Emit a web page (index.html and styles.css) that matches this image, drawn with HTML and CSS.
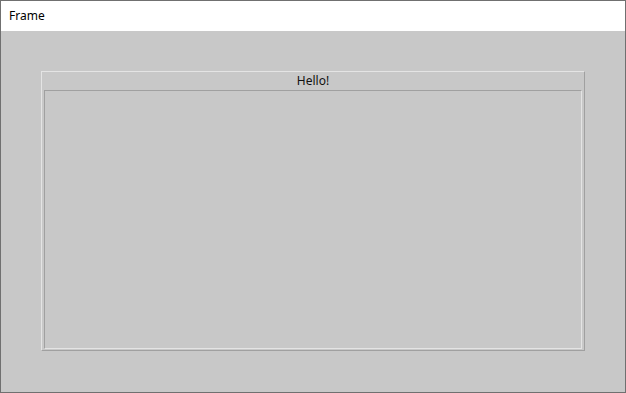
FILE: index.html
```html
<!DOCTYPE html>
<html lang="en">
    <head>
        <meta charset="UTF-8">
        <title>Frame</title>
        <link rel="stylesheet" href="styles.css">
    </head>
    <body>
        <div class="window">
            <div class="title-bar">Frame</div>
            <div class="content">
                <div class="panel">
                    <div class="panel-title">Hello!</div>
                    <div class="panel-body"></div>
                </div>
            </div>
        </div>
    </body>
</html>
```

FILE: styles.css
```css
* {
    margin: 0;
    padding: 0;
    box-sizing: border-box;
}

body {
    font-family: 'Noto Sans', 'DejaVu Sans', sans-serif;
    font-size: 12px;
    color: #000;
}

.window {
    width: 626px;
    height: 393px;
    border: 1px solid #707070;
    display: flex;
    flex-direction: column;
}

.title-bar {
    height: 30px;
    background: #fff;
    padding-left: 8px;
    line-height: 30px;
}

.content {
    flex: 1;
    background: #c8c8c8;
    padding: 40px 40px 41px 40px;
    display: flex;
}

.panel {
    flex: 1;
    display: flex;
    flex-direction: column;
    border: 1px solid;
    border-color: #e4e4e4 #a0a0a0 #a0a0a0 #e4e4e4;
    padding: 0 2px 1px 2px;
}

.panel-title {
    height: 18px;
    line-height: 17px;
    text-align: center;
    color: #111;
}

.panel-body {
    flex: 1;
    border: 1px solid;
    border-color: #a0a0a0 #e4e4e4 #e4e4e4 #a0a0a0;
}
```
